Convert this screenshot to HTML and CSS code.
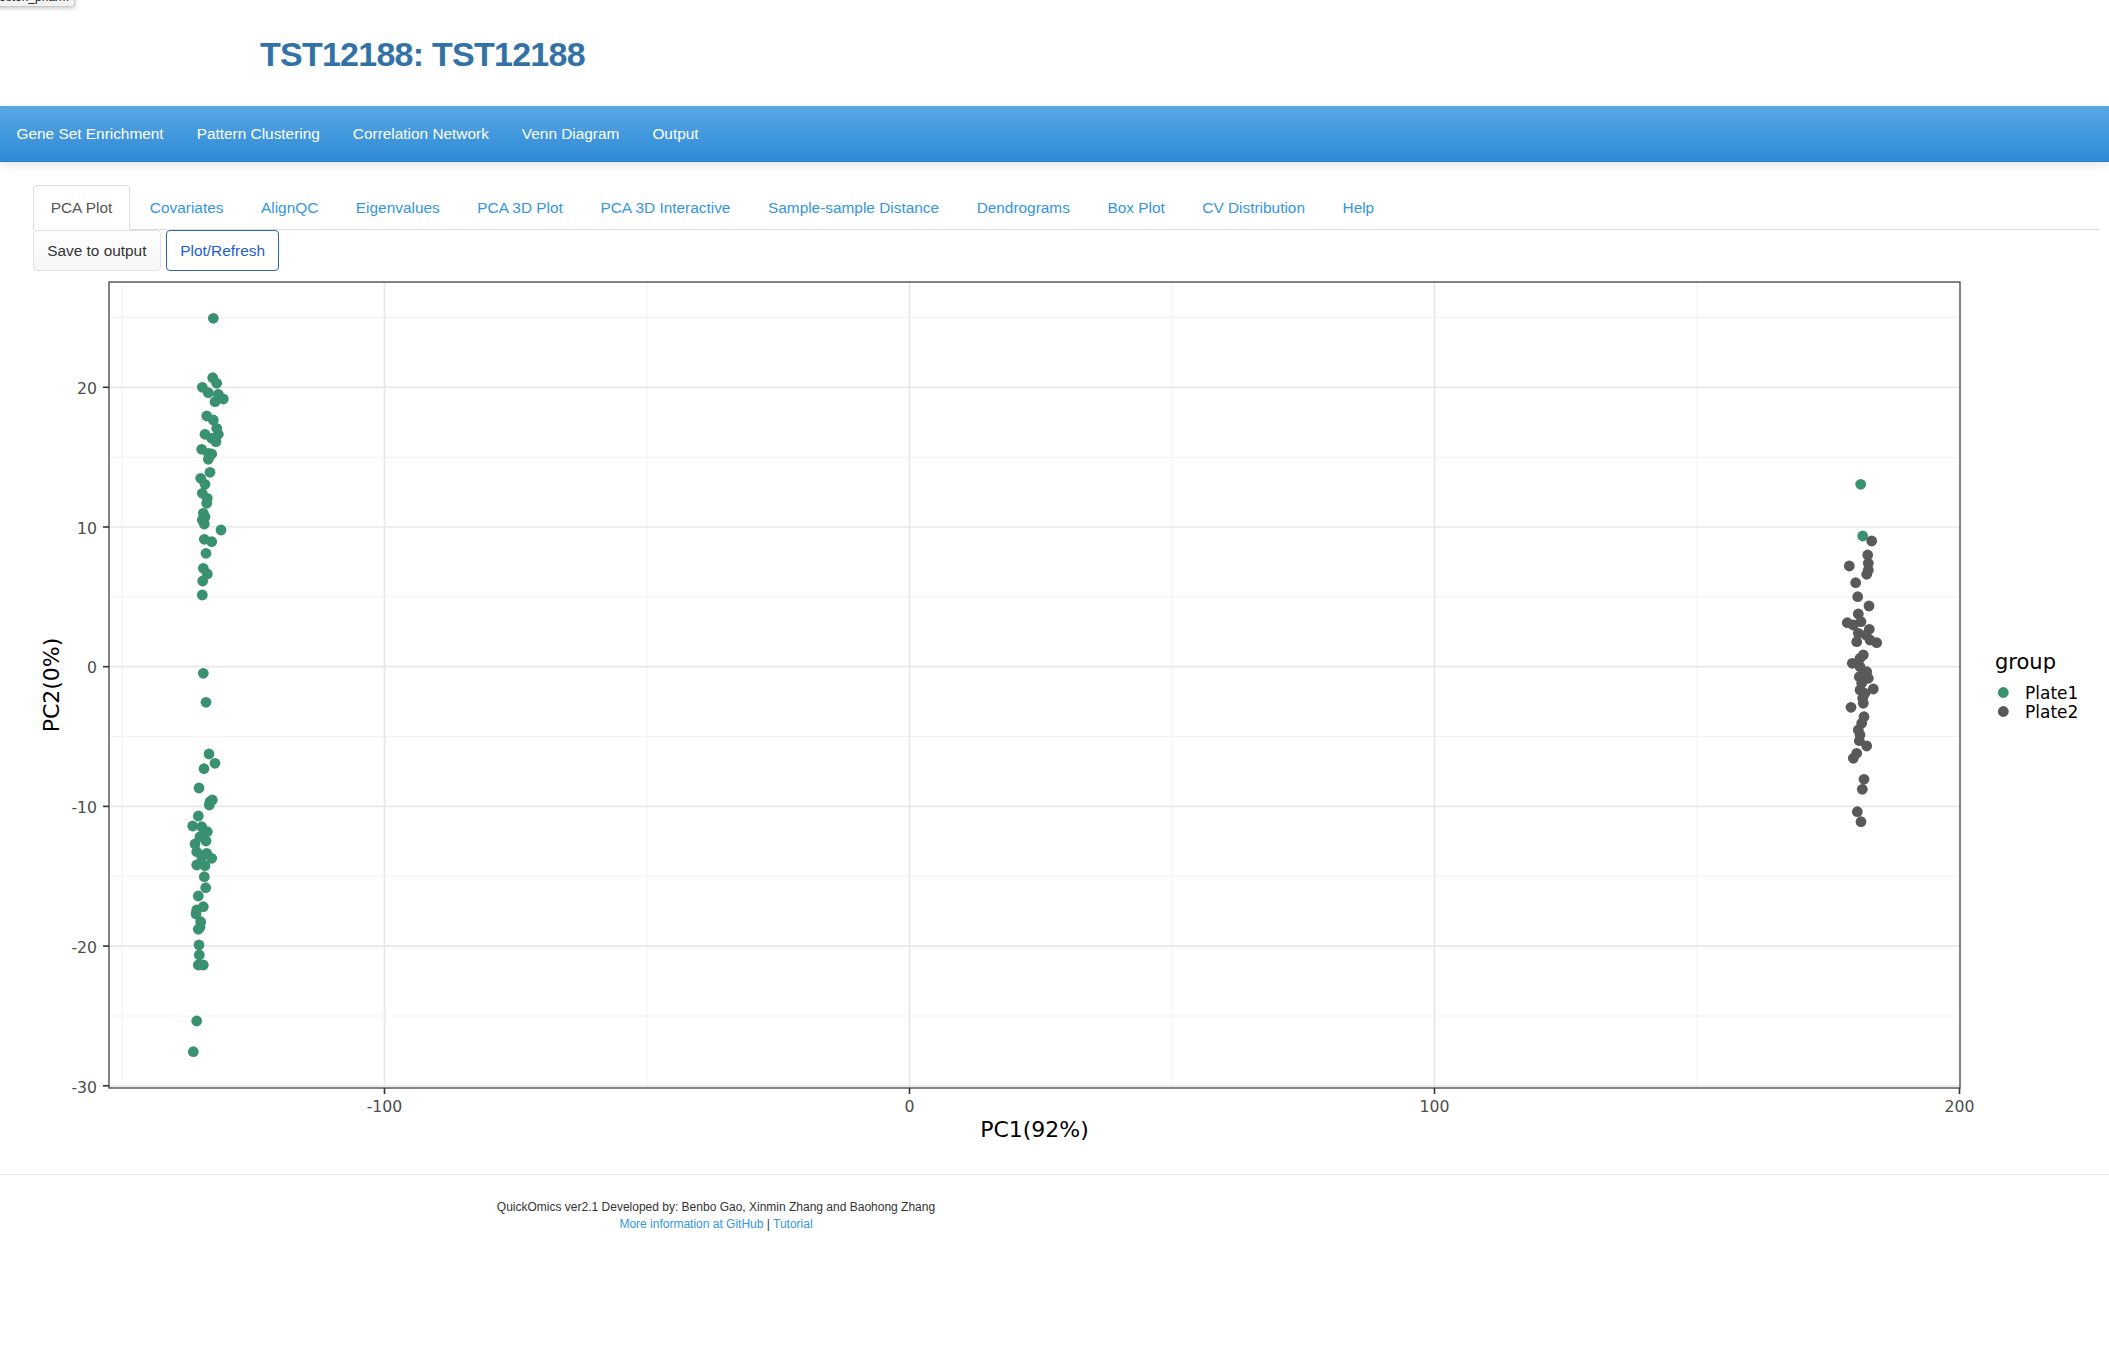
FILE: index.html
```html
<!DOCTYPE html>
<html>
<head>
<meta charset="utf-8">
<title>TST12188</title>
<link rel="stylesheet" href="styles.css">
</head>
<body>
<div class="tip-frag"><span>oston_pharm</span></div>
<div class="header"><h1 class="title">TST12188: TST12188</h1></div>
<nav class="navbar">
  <span class="nav-item">Gene Set Enrichment</span>
  <span class="nav-item">Pattern Clustering</span>
  <span class="nav-item">Correlation Network</span>
  <span class="nav-item">Venn Diagram</span>
  <span class="nav-item">Output</span>
</nav>
<div class="main">
  <ul class="tabs">
    <li class="tab active">PCA Plot</li>
    <li class="tab">Covariates</li>
    <li class="tab">AlignQC</li>
    <li class="tab">Eigenvalues</li>
    <li class="tab">PCA 3D Plot</li>
    <li class="tab">PCA 3D Interactive</li>
    <li class="tab">Sample-sample Distance</li>
    <li class="tab">Dendrograms</li>
    <li class="tab">Box Plot</li>
    <li class="tab">CV Distribution</li>
    <li class="tab">Help</li>
  </ul>
  <div class="btn-row">
    <button class="btn btn-save">Save to output</button>
    <button class="btn btn-plot">Plot/Refresh</button>
  </div>
  <svg class="plot" width="2060" height="880" viewBox="33 272 2060 880" xmlns="http://www.w3.org/2000/svg">
    <rect x="109" y="282" width="1851" height="806" fill="#ffffff"/>
    <g class="grid-minor">
      <line x1="109" x2="1960" y1="317.5" y2="317.5"/>
      <line x1="109" x2="1960" y1="457.2" y2="457.2"/>
      <line x1="109" x2="1960" y1="596.9" y2="596.9"/>
      <line x1="109" x2="1960" y1="736.6" y2="736.6"/>
      <line x1="109" x2="1960" y1="876.3" y2="876.3"/>
      <line x1="109" x2="1960" y1="1016" y2="1016"/>
      <line x1="122" x2="122" y1="282" y2="1088"/>
      <line x1="647" x2="647" y1="282" y2="1088"/>
      <line x1="1172" x2="1172" y1="282" y2="1088"/>
      <line x1="1697" x2="1697" y1="282" y2="1088"/>
    </g>
    <g class="grid-major">
      <line x1="109" x2="1960" y1="387.3" y2="387.3"/>
      <line x1="109" x2="1960" y1="527" y2="527"/>
      <line x1="109" x2="1960" y1="666.7" y2="666.7"/>
      <line x1="109" x2="1960" y1="806.4" y2="806.4"/>
      <line x1="109" x2="1960" y1="946.1" y2="946.1"/>
      <line x1="109" x2="1960" y1="1085.8" y2="1085.8"/>
      <line x1="384.5" x2="384.5" y1="282" y2="1088"/>
      <line x1="909.5" x2="909.5" y1="282" y2="1088"/>
      <line x1="1434.5" x2="1434.5" y1="282" y2="1088"/>
    </g>
    <g class="pts-green">
      <circle cx="213.3" cy="318.3" r="5.4"/><circle cx="212.7" cy="377.7" r="5.4"/><circle cx="216.7" cy="383.3" r="5.4"/>
      <circle cx="202.3" cy="387.3" r="5.4"/><circle cx="208.3" cy="392.7" r="5.4"/><circle cx="218.3" cy="394.3" r="5.4"/>
      <circle cx="223.3" cy="399" r="5.4"/><circle cx="215" cy="401.7" r="5.4"/><circle cx="206.7" cy="416" r="5.4"/>
      <circle cx="213.3" cy="420" r="5.4"/><circle cx="216.7" cy="428.3" r="5.4"/><circle cx="205" cy="434.3" r="5.4"/>
      <circle cx="218.3" cy="434.3" r="5.4"/><circle cx="211.7" cy="438.3" r="5.4"/><circle cx="216" cy="441.7" r="5.4"/>
      <circle cx="201.7" cy="449.3" r="5.4"/><circle cx="208.3" cy="453.3" r="5.4"/><circle cx="211.7" cy="454" r="5.4"/>
      <circle cx="208.3" cy="459.3" r="5.4"/><circle cx="210" cy="472.3" r="5.4"/><circle cx="200.7" cy="478.3" r="5.4"/>
      <circle cx="205" cy="484.3" r="5.4"/><circle cx="202.3" cy="493.3" r="5.4"/><circle cx="207.3" cy="498.3" r="5.4"/>
      <circle cx="206.7" cy="503.3" r="5.4"/><circle cx="203.3" cy="513.3" r="5.4"/><circle cx="205" cy="516.7" r="5.4"/>
      <circle cx="202.3" cy="520" r="5.4"/><circle cx="204.3" cy="524" r="5.4"/><circle cx="221" cy="530" r="5.4"/>
      <circle cx="204.3" cy="539.3" r="5.4"/><circle cx="211.7" cy="541.7" r="5.4"/><circle cx="206" cy="553.3" r="5.4"/>
      <circle cx="203.3" cy="568.3" r="5.4"/><circle cx="207.3" cy="574" r="5.4"/><circle cx="202.7" cy="581" r="5.4"/>
      <circle cx="202.3" cy="595" r="5.4"/><circle cx="203.3" cy="673.3" r="5.4"/><circle cx="206" cy="702.3" r="5.4"/>
      <circle cx="209" cy="754" r="5.4"/><circle cx="215" cy="763.3" r="5.4"/><circle cx="204" cy="768.7" r="5.4"/>
      <circle cx="199" cy="788" r="5.4"/><circle cx="210" cy="801.7" r="5.4"/><circle cx="212.3" cy="800" r="5.4"/>
      <circle cx="209.3" cy="805" r="5.4"/><circle cx="198.3" cy="816" r="5.4"/><circle cx="192.7" cy="826" r="5.4"/>
      <circle cx="201.7" cy="826.7" r="5.4"/><circle cx="207.3" cy="831.7" r="5.4"/><circle cx="200" cy="836.7" r="5.4"/>
      <circle cx="206" cy="841" r="5.4"/><circle cx="195" cy="844" r="5.4"/><circle cx="196.7" cy="851.7" r="5.4"/>
      <circle cx="206.7" cy="853.3" r="5.4"/><circle cx="201.7" cy="856.7" r="5.4"/><circle cx="211.7" cy="858.3" r="5.4"/>
      <circle cx="196.7" cy="865" r="5.4"/><circle cx="205" cy="865.7" r="5.4"/><circle cx="204.3" cy="876.7" r="5.4"/>
      <circle cx="205.7" cy="887.7" r="5.4"/><circle cx="198.3" cy="896" r="5.4"/><circle cx="203.3" cy="906.7" r="5.4"/>
      <circle cx="196.7" cy="910" r="5.4"/><circle cx="196" cy="914" r="5.4"/><circle cx="200.7" cy="921.7" r="5.4"/>
      <circle cx="200" cy="927.3" r="5.4"/><circle cx="198.3" cy="929.3" r="5.4"/><circle cx="199" cy="945" r="5.4"/>
      <circle cx="199.3" cy="955" r="5.4"/><circle cx="198.3" cy="965" r="5.4"/><circle cx="203.3" cy="965" r="5.4"/>
      <circle cx="196.7" cy="1021" r="5.4"/><circle cx="193.3" cy="1051.7" r="5.4"/>
      <circle cx="1860.7" cy="484.3" r="5.4"/><circle cx="1862.7" cy="536" r="5.4"/>
    </g>
    <g class="pts-gray">
      <circle cx="1871.7" cy="541" r="5.4"/><circle cx="1867.7" cy="555" r="5.4"/><circle cx="1849.3" cy="566" r="5.4"/>
      <circle cx="1868.3" cy="563.3" r="5.4"/><circle cx="1868.3" cy="570" r="5.4"/><circle cx="1866.7" cy="574.3" r="5.4"/>
      <circle cx="1855.7" cy="582.7" r="5.4"/><circle cx="1857.7" cy="596.7" r="5.4"/><circle cx="1869" cy="606" r="5.4"/>
      <circle cx="1858.3" cy="614" r="5.4"/><circle cx="1847.3" cy="622.7" r="5.4"/><circle cx="1853.3" cy="625" r="5.4"/>
      <circle cx="1861" cy="621.7" r="5.4"/><circle cx="1869.3" cy="629.3" r="5.4"/><circle cx="1858.3" cy="633.3" r="5.4"/>
      <circle cx="1866" cy="635" r="5.4"/><circle cx="1856.7" cy="641.7" r="5.4"/><circle cx="1870" cy="640" r="5.4"/>
      <circle cx="1876.7" cy="642.7" r="5.4"/><circle cx="1863.3" cy="655" r="5.4"/><circle cx="1860" cy="658.3" r="5.4"/>
      <circle cx="1852.3" cy="663.3" r="5.4"/><circle cx="1860" cy="666.7" r="5.4"/><circle cx="1866.7" cy="671.7" r="5.4"/>
      <circle cx="1859.3" cy="676.7" r="5.4"/><circle cx="1868.3" cy="678.3" r="5.4"/><circle cx="1861.7" cy="683.3" r="5.4"/>
      <circle cx="1873.3" cy="689" r="5.4"/><circle cx="1860" cy="690" r="5.4"/><circle cx="1865" cy="693.3" r="5.4"/>
      <circle cx="1862.7" cy="698.3" r="5.4"/><circle cx="1863.3" cy="703.3" r="5.4"/><circle cx="1851" cy="707.3" r="5.4"/>
      <circle cx="1864" cy="716.7" r="5.4"/><circle cx="1861.7" cy="723.3" r="5.4"/><circle cx="1858.3" cy="730" r="5.4"/>
      <circle cx="1860" cy="735" r="5.4"/><circle cx="1859.3" cy="740.7" r="5.4"/><circle cx="1866.7" cy="746" r="5.4"/>
      <circle cx="1856.7" cy="753.3" r="5.4"/><circle cx="1853.3" cy="758.3" r="5.4"/><circle cx="1864" cy="779.3" r="5.4"/>
      <circle cx="1862.3" cy="789.3" r="5.4"/><circle cx="1857.3" cy="811.7" r="5.4"/><circle cx="1861" cy="821.7" r="5.4"/>
    </g>
    <rect class="panel-border" x="109" y="282" width="1851" height="806"/>
    <g class="ticks">
      <line x1="103" x2="109" y1="387.3" y2="387.3"/>
      <line x1="103" x2="109" y1="527" y2="527"/>
      <line x1="103" x2="109" y1="666.7" y2="666.7"/>
      <line x1="103" x2="109" y1="806.4" y2="806.4"/>
      <line x1="103" x2="109" y1="946.1" y2="946.1"/>
      <line x1="103" x2="109" y1="1085.8" y2="1085.8"/>
      <line x1="384.5" x2="384.5" y1="1088" y2="1094"/>
      <line x1="909.5" x2="909.5" y1="1088" y2="1094"/>
      <line x1="1434.5" x2="1434.5" y1="1088" y2="1094"/>
      <line x1="1959.5" x2="1959.5" y1="1088" y2="1094"/>
    </g>
    <g class="tick-label tick-y">
      <text x="97" y="394">20</text>
      <text x="97" y="533.7">10</text>
      <text x="97" y="673.4">0</text>
      <text x="97" y="813.1">-10</text>
      <text x="97" y="952.8">-20</text>
      <text x="97" y="1092.5">-30</text>
    </g>
    <g class="tick-label tick-x">
      <text x="384.5" y="1112">-100</text>
      <text x="909.5" y="1112">0</text>
      <text x="1434.5" y="1112">100</text>
      <text x="1959.5" y="1112">200</text>
    </g>
    <text class="axis-title" x="1034.5" y="1136.5" text-anchor="middle">PC1(92%)</text>
    <text class="axis-title" transform="translate(59,685) rotate(-90)" x="0" y="0" text-anchor="middle">PC2(0%)</text>
    <text class="legend-title" x="1995" y="669">group</text>
    <circle class="lg-green" cx="2003.3" cy="692.5" r="5.4"/>
    <circle class="lg-gray" cx="2003.3" cy="711.5" r="5.4"/>
    <text class="legend-label" x="2025" y="699">Plate1</text>
    <text class="legend-label" x="2025" y="718">Plate2</text>
  </svg>
</div>
<hr class="footer-rule">
<div class="footer">
  <div>QuickOmics ver2.1 Developed by: Benbo Gao, Xinmin Zhang and Baohong Zhang</div>
  <div><a class="flink">More information at GitHub</a> | <a class="flink">Tutorial</a></div>
</div>
</body>
</html>
```

FILE: styles.css
```css
html, body {
  margin: 0;
  padding: 0;
  background: #ffffff;
}
body {
  font-family: "Liberation Sans", Arial, Helvetica, sans-serif;
  font-size: 15.4px;
  color: #333333;
  position: relative;
  overflow: hidden;
  min-height: 1358px;
}
.tip-frag {
  position: absolute;
  top: -13px;
  left: -6px;
  width: 69px;
  padding: 1px 6px 1px 4px;
  background: #f1f1f1;
  border: 1px solid #c9c9c9;
  border-radius: 3px;
  box-shadow: 0 1px 4px rgba(0, 0, 0, 0.25);
  font-size: 12px;
  line-height: 16px;
  color: #222;
  white-space: nowrap;
  overflow: hidden;
  text-align: right;
}
.header {
  height: 106px;
  box-sizing: border-box;
  padding: 36px 0 0 260px;
}
.title {
  margin: 0;
  font-size: 34px;
  line-height: 37px;
  font-weight: bold;
  letter-spacing: -0.75px;
  color: #3372a6;
}
.navbar {
  display: flex;
  height: 56px;
  box-sizing: border-box;
  background: linear-gradient(#58a8e3, #2f8ad7);
  border-bottom: 1px solid #2a7dc6;
  box-shadow: 0 3px 10px rgba(0, 0, 0, 0.1);
}
.nav-item {
  padding: 0 16.5px;
  line-height: 55px;
  color: #ffffff;
  white-space: nowrap;
}
.main {
  padding: 23px 9px 0 33px;
}
.tabs {
  display: flex;
  margin: 0;
  padding: 0;
  list-style: none;
  border-bottom: 1px solid #dddddd;
}
.tab {
  margin: 0 2.2px -1px 0;
  padding: 10.5px 16.7px;
  line-height: 22px;
  border: 1px solid transparent;
  border-radius: 4px 4px 0 0;
  color: #3496e0;
  white-space: nowrap;
}
.tab.active {
  color: #555555;
  background: #ffffff;
  border-color: #dddddd;
  border-bottom-color: transparent;
}
.btn-row {
  display: flex;
  gap: 5.5px;
}
.btn {
  margin: 0;
  padding: 8.5px 13.2px;
  font-family: "Liberation Sans", Arial, Helvetica, sans-serif;
  font-size: 15.4px;
  line-height: 22px;
  border-radius: 4px;
  border: 1px solid #dedede;
  background: #ffffff;
  color: #333333;
}
.btn-save {
  background: linear-gradient(#ffffff, #f6f6f6);
  border-color: #e2e2e2;
}
.btn-plot {
  border-color: #2f67a6;
  color: #1d5fc9;
}
.plot {
  display: block;
  margin-top: 1px;
}
.grid-minor line {
  stroke: #f1f1f1;
  stroke-width: 1;
}
.grid-major line {
  stroke: #e8e8e8;
  stroke-width: 1.7;
}
.pts-green circle, .lg-green {
  fill: #3a9170;
}
.pts-gray circle, .lg-gray {
  fill: #595959;
}
.panel-border {
  fill: none;
  stroke: #333333;
  stroke-width: 1.2;
}
.ticks line {
  stroke: #333333;
  stroke-width: 1.6;
}
.tick-label {
  font-family: "DejaVu Sans", sans-serif;
  font-size: 15.7px;
  fill: #4d4d4d;
}
.tick-y text {
  text-anchor: end;
}
.tick-x text {
  text-anchor: middle;
}
.axis-title {
  font-family: "DejaVu Sans", sans-serif;
  font-size: 22px;
  fill: #000000;
}
.legend-title {
  font-family: "DejaVu Sans", sans-serif;
  font-size: 21px;
  fill: #000000;
}
.legend-label {
  font-family: "DejaVu Sans", sans-serif;
  font-size: 17px;
  fill: #000000;
}
.footer-rule {
  margin: 22px 0 0;
  border: 0;
  border-top: 1px solid #e6e6e6;
  height: 0;
}
.footer {
  width: 1432px;
  padding-top: 24px;
  text-align: center;
  font-size: 12px;
  line-height: 16.6px;
  color: #333333;
}
.flink {
  color: #3496e0;
  text-decoration: none;
}
```
